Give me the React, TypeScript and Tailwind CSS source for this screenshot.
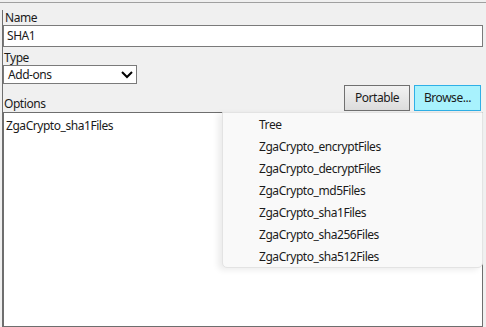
const menuItems = [
  "Tree",
  "ZgaCrypto_encryptFiles",
  "ZgaCrypto_decryptFiles",
  "ZgaCrypto_md5Files",
  "ZgaCrypto_sha1Files",
  "ZgaCrypto_sha256Files",
  "ZgaCrypto_sha512Files",
];

const App = () => {
  return (
    <div className="relative h-[327px] w-[486px] overflow-hidden bg-[#f0f0f0] font-['Noto_Sans',sans-serif] text-[12px] tracking-[-0.45px] text-[#1a1a1a]">
      {/* top separator */}
      <div className="mt-[2px] h-px w-full bg-[#a0a0a0]" />

      <div className="ml-[2px] mt-[7px] flex h-[317px] w-[481px] flex-col border-l border-[#6e6e6e]">
        {/* name */}
        <div className="h-[15px] pl-[2px] leading-[15px]">Name</div>
        <div className="flex h-[22px] w-[480px] items-center border border-[#7a7a7a] bg-white pl-[3px]">
          SHA1
        </div>

        {/* type */}
        <div className="mt-[3px] h-[15px] pl-[1px] leading-[15px]">Type</div>
        <div className="flex h-[19px] w-[134px] items-center justify-between border border-[#7a7a7a] bg-white pl-[4px] pr-[3px]">
          <span>Add-ons</span>
          <svg width="12" height="8" viewBox="0 0 12 8">
            <polyline
              points="1,1 6,6 11,1"
              fill="none"
              stroke="#000"
              strokeWidth="2"
            />
          </svg>
        </div>

        {/* options row */}
        <div className="mt-[1px] flex h-[27px] items-end justify-between pb-[1px]">
          <div className="pl-[1px] leading-[15px]">Options</div>
          <div className="flex gap-[4px] pr-[2px]">
            <button className="h-[26px] w-[66px] border border-[#707070] bg-gradient-to-b from-[#f2f2f2] to-[#dcdcdc] text-[12px] text-[#1a1a1a]">
              Portable
            </button>
            <button className="h-[26px] w-[67px] border border-[#2fb0e6] bg-[#a8f2fd] text-[12px] text-[#1a1a1a]">
              Browse...
            </button>
          </div>
        </div>

        {/* options list */}
        <div className="h-[215px] w-[480px] border border-[#6e6e6e] bg-white px-[2px] pt-[5px] leading-[16px]">
          ZgaCrypto_sha1Files
        </div>
      </div>

      {/* popup menu */}
      <div className="absolute left-[222px] top-[112px] h-[156px] w-[261px] rounded-b-[5px] border border-[#e3e3e3] bg-[#f9f9f9] pt-[1px] shadow-[-4px_2px_6px_rgba(0,0,0,0.08)]">
        {menuItems.map((item) => (
          <div key={item} className="h-[22px] pl-[36px] leading-[22px] text-[#1b1b1b]">
            {item}
          </div>
        ))}
      </div>
    </div>
  );
};

export default App;
